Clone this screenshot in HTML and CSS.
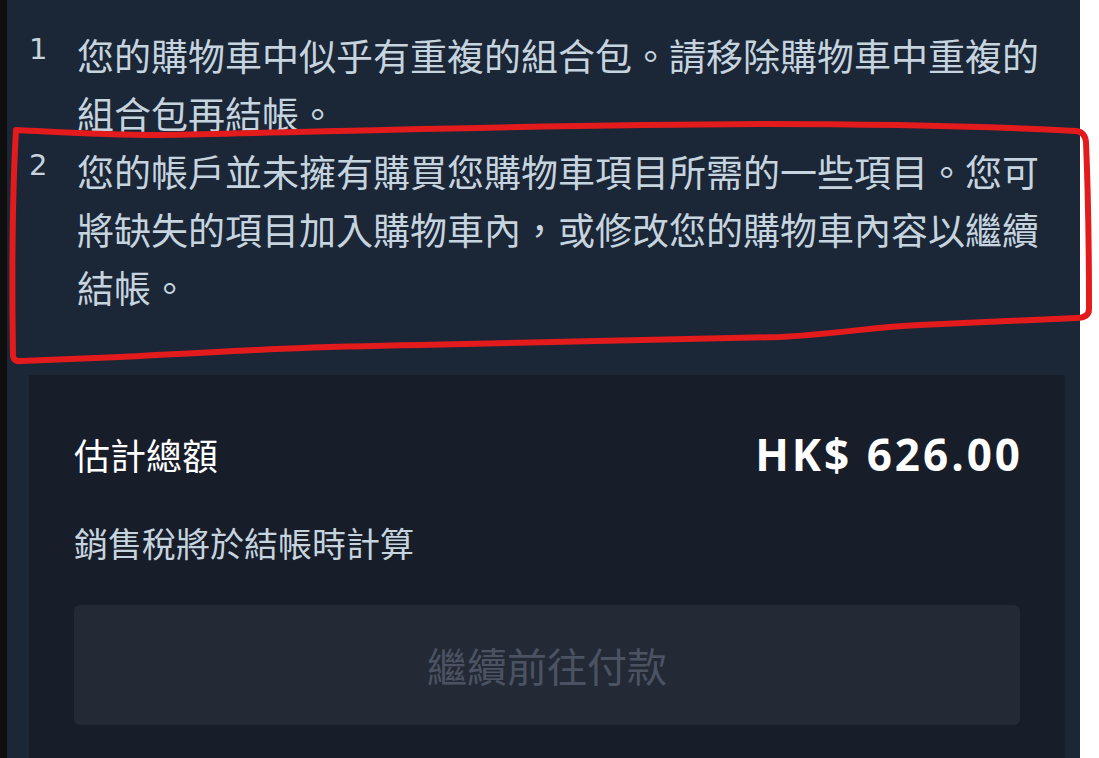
FILE: index.html
```html
<!DOCTYPE html>
<html lang="zh-Hant">
  <head>
    <meta charset="utf-8">
    <title>購物車</title>
    <link rel="stylesheet" href="styles.css">
  </head>
  <body>
    <div class="cart">
      <ol class="notices">
        <li class="notice">
          <span class="notice-num">1</span>
          <span class="notice-text">您的購物車中似乎有重複的組合包。請移除購物車中重複的組合包再結帳。</span>
        </li>
        <li class="notice">
          <span class="notice-num">2</span>
          <span class="notice-text">您的帳戶並未擁有購買您購物車項目所需的一些項目。您可將缺失的項目加入購物車內，或修改您的購物車內容以繼續結帳。</span>
        </li>
      </ol>

      <div class="summary">
        <div class="summary-row">
          <span class="summary-label">估計總額</span>
          <span class="summary-price">HK$ 626.00</span>
        </div>
        <p class="summary-tax">銷售稅將於結帳時計算</p>
        <button class="checkout-btn" disabled>繼續前往付款</button>
      </div>
    </div>

    <!-- marker scribble around the second notice -->
    <svg class="scribble" width="1099" height="400" viewBox="0 0 1099 400">
      <path d="M 16 130
               C 12 200, 12 290, 13 356
               Q 14 362, 21 361
               L 120 357
               C 250 350, 300 347, 420 345
               L 780 337
               C 850 333, 870 327, 920 325
               L 1076 318
               Q 1089 318, 1089 309
               C 1089 250, 1088 190, 1086 142
               Q 1085 132, 1076 131
               C 1000 127, 920 124, 760 124
               C 500 125, 300 133, 160 135
               C 100 135, 40 131, 16 130 Z" />
    </svg>
  </body>
</html>
```

FILE: styles.css
```css
body {
  position: relative;
  margin: 0;
  background: #ffffff;
  font-family: "Noto Sans CJK TC", "Noto Sans", sans-serif;
  overflow: hidden;
}

.cart {
  box-sizing: border-box;
  width: 1080px;
  min-height: 758px;
  padding: 26px 15px 0 22px;
  border-left: 7px solid #0e0e0f;
  background: #1b2637;
}

/* notices list */
.notices {
  list-style: none;
  margin: 0;
  padding: 0;
}
.notice {
  display: flex;
  align-items: flex-start;
}
.notice-num {
  flex: 0 0 48px;
  font-family: "DejaVu Sans", sans-serif;
  font-size: 29px;
  line-height: 46px;
  color: #c6d4df;
}
.notice-text {
  flex: 1;
  font-size: 37px;
  line-height: 58px;
  color: #c6d4df;
}

/* totals box */
.summary {
  margin-top: 59px;
  padding: 49px 45px 40px;
  background: #171d29;
}
.summary-row {
  display: flex;
  justify-content: space-between;
  align-items: center;
  height: 60px;
}
.summary-label {
  font-size: 36px;
  color: #ffffff;
}
.summary-price {
  margin-right: -3px;
  font-family: "Open Sans", sans-serif;
  font-weight: 700;
  font-size: 44px;
  letter-spacing: 3px;
  color: #ffffff;
}
.summary-tax {
  margin: 34px 0 0;
  font-size: 34px;
  line-height: 50px;
  color: #c6d4df;
}
.checkout-btn {
  display: block;
  width: 100%;
  height: 120px;
  margin-top: 37px;
  border: none;
  border-radius: 6px;
  background: #232a36;
  font-family: "Noto Sans CJK TC", sans-serif;
  font-size: 40px;
  color: #4b5363;
}

.scribble {
  position: absolute;
  left: 0;
  top: 0;
  pointer-events: none;
}
.scribble path {
  fill: none;
  stroke: #e31b1c;
  stroke-width: 6;
  stroke-linejoin: round;
}
```
